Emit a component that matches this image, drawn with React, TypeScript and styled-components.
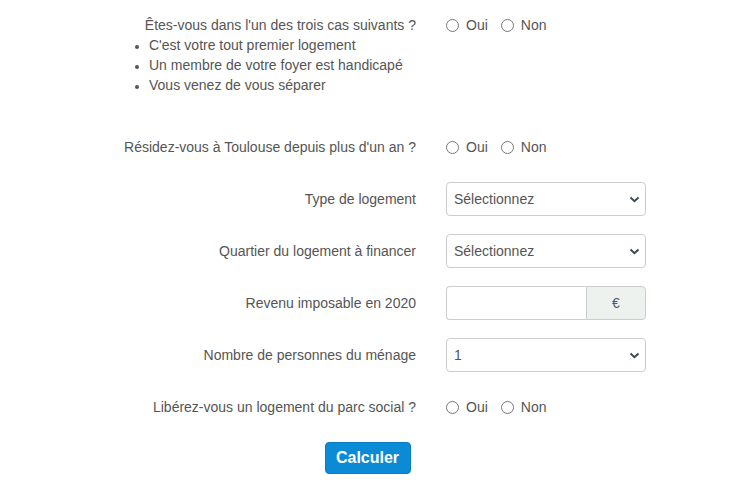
import React from "react";
import styled, { createGlobalStyle } from "styled-components";

const Global = createGlobalStyle`
  html, body { margin: 0; padding: 0; background: #fff; }
  body { font-family: "Liberation Sans", Arial, sans-serif; font-size: 14px; color: #555; }
`;

const Form = styled.form`
  display: flex;
  flex-direction: column;
  padding-top: 15px;
  width: 739px;
`;

const Row = styled.div<{ $mt?: number }>`
  display: grid;
  grid-template-columns: 416px 200px;
  column-gap: 30px;
  align-items: center;
  margin-top: ${(p) => p.$mt ?? 0}px;
`;

const Label = styled.div`
  text-align: right;
  line-height: 20px;
`;

const LabelBlock = styled.div`
  line-height: 20px;
  align-self: start;
`;

const LabelLine = styled.div`
  text-align: right;
`;

const List = styled.ul`
  margin: 0;
  padding: 0 0 0 149px;
  text-align: left;
  li::marker { font-size: 12px; }
`;

const Radios = styled.div`
  display: flex;
  align-items: center;
  gap: 13px;
  align-self: start;
  height: 20px;
`;

const RadioLabel = styled.label`
  display: flex;
  align-items: center;
  gap: 7px;
  line-height: 20px;
`;

const Radio = styled.input`
  margin: 0;
  width: 13px;
  height: 13px;
`;

const SelectWrap = styled.div`
  position: relative;
  height: 34px;
`;

const Select = styled.select`
  appearance: none;
  width: 100%;
  height: 34px;
  box-sizing: border-box;
  border: 1px solid #ccc;
  border-radius: 4px;
  background: #fff;
  padding: 0 30px 0 7px;
  font-family: inherit;
  font-size: 14px;
  color: #555;
`;

const Chevron = styled.svg`
  position: absolute;
  right: 6px;
  top: 14px;
  pointer-events: none;
`;

const InputGroup = styled.div`
  display: flex;
  height: 34px;
`;

const Input = styled.input`
  flex: 1;
  min-width: 0;
  box-sizing: border-box;
  border: 1px solid #ccc;
  border-right: none;
  border-radius: 4px 0 0 4px;
  height: 34px;
  padding: 0 8px;
  font-family: inherit;
  font-size: 14px;
`;

const Addon = styled.span`
  width: 60px;
  box-sizing: border-box;
  border: 1px solid #ccc;
  border-radius: 0 4px 4px 0;
  background: #eef2ef;
  display: flex;
  align-items: center;
  justify-content: center;
  color: #555;
`;

const ButtonRow = styled.div`
  display: flex;
  justify-content: center;
  margin-top: 25px;
  padding-right: 4px;
`;

const Button = styled.button`
  background: #0b8bd6;
  border: 1px solid #0a7cc0;
  border-radius: 4px;
  color: #fff;
  font-family: "Liberation Sans", Arial, sans-serif;
  font-weight: bold;
  font-size: 16px;
  height: 32px;
  width: 86px;
  padding: 0;
`;

const YesNo = ({ name }: { name: string }) => (
  <Radios>
    <RadioLabel>
      <Radio type="radio" name={name} /> Oui
    </RadioLabel>
    <RadioLabel>
      <Radio type="radio" name={name} /> Non
    </RadioLabel>
  </Radios>
);

const SelectBox = ({ value }: { value: string }) => (
  <SelectWrap>
    <Select defaultValue={value}>
      <option>{value}</option>
    </Select>
    <Chevron width="11" height="7" viewBox="0 0 11 7">
      <path d="M1.5 1.5 L5.5 5.2 L9.5 1.5" fill="none" stroke="#3d4a52" strokeWidth="2" />
    </Chevron>
  </SelectWrap>
);

export default function App() {
  return (
    <>
      <Global />
      <Form onSubmit={(e) => e.preventDefault()}>
        <Row>
          <LabelBlock>
            <LabelLine>Êtes-vous dans l'un des trois cas suivants ?</LabelLine>
            <List>
              <li>C'est votre tout premier logement</li>
              <li>Un membre de votre foyer est handicapé</li>
              <li>Vous venez de vous séparer</li>
            </List>
          </LabelBlock>
          <YesNo name="cas" />
        </Row>
        <Row $mt={42}>
          <Label>Résidez-vous à Toulouse depuis plus d'un an ?</Label>
          <YesNo name="toulouse" />
        </Row>
        <Row $mt={25}>
          <Label>Type de logement</Label>
          <SelectBox value="Sélectionnez" />
        </Row>
        <Row $mt={18}>
          <Label>Quartier du logement à financer</Label>
          <SelectBox value="Sélectionnez" />
        </Row>
        <Row $mt={18}>
          <Label>Revenu imposable en 2020</Label>
          <InputGroup>
            <Input type="text" />
            <Addon>€</Addon>
          </InputGroup>
        </Row>
        <Row $mt={18}>
          <Label>Nombre de personnes du ménage</Label>
          <SelectBox value="1" />
        </Row>
        <Row $mt={25}>
          <Label>Libérez-vous un logement du parc social ?</Label>
          <YesNo name="parc" />
        </Row>
        <ButtonRow>
          <Button type="submit">Calculer</Button>
        </ButtonRow>
      </Form>
    </>
  );
}
